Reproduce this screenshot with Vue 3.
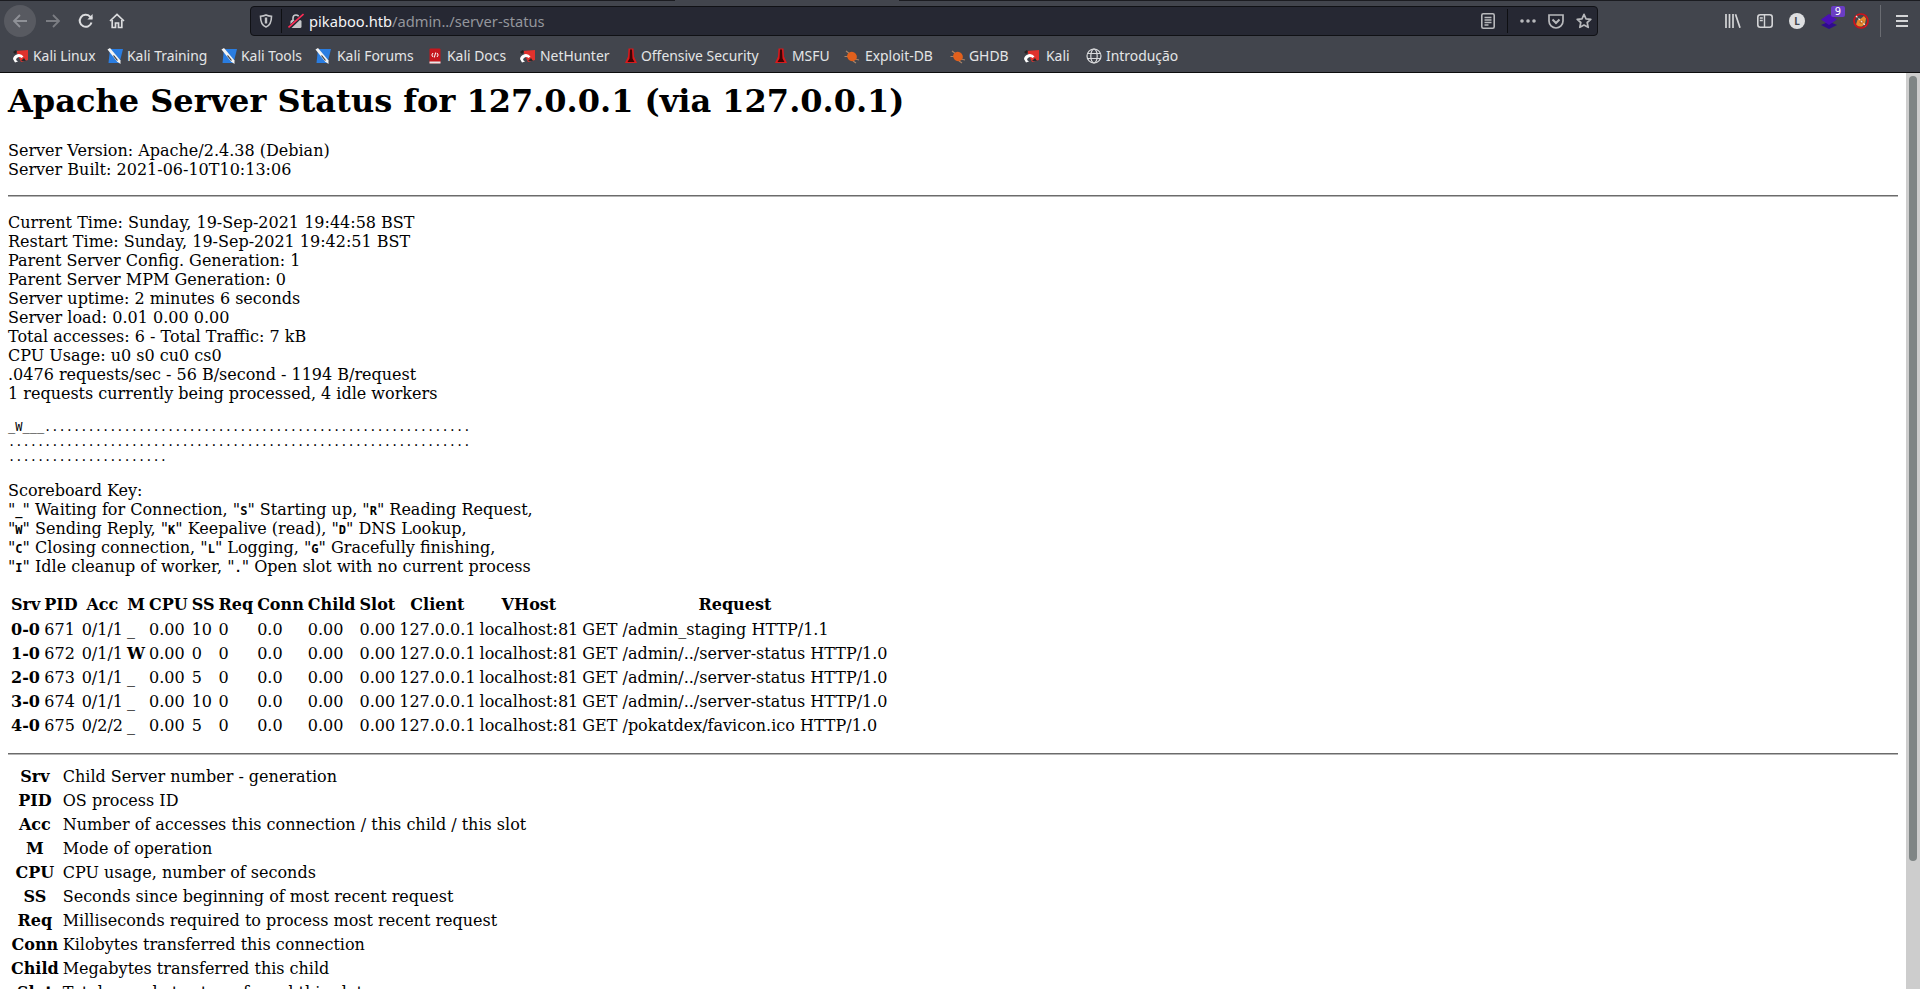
<script setup>
const bookmarks = [
  { label: 'Kali Linux', icon: 'kali', width: 95, gap: 5 },
  { label: 'Kali Training', icon: 'blue', width: 114, gap: 4 },
  { label: 'Kali Tools', icon: 'blue', width: 94, gap: 4 },
  { label: 'Kali Forums', icon: 'blue', width: 112, gap: 6 },
  { label: 'Kali Docs', icon: 'docs', width: 92, gap: 4 },
  { label: 'NetHunter', icon: 'kali', width: 104, gap: 5 },
  { label: 'Offensive Security', icon: 'msf', width: 150, gap: 2 },
  { label: 'MSFU', icon: 'msf', width: 71, gap: 3 },
  { label: 'Exploit-DB', icon: 'bug', width: 106, gap: 5 },
  { label: 'GHDB', icon: 'bug', width: 73, gap: 3 },
  { label: 'Kali', icon: 'kali', width: 63, gap: 7 },
  { label: 'Introdução', icon: 'globe', width: 100, gap: 4 }
]
const headers = ['Srv', 'PID', 'Acc', 'M', 'CPU', 'SS', 'Req', 'Conn', 'Child', 'Slot', 'Client', 'VHost', 'Request']
const rows = [
  ['0-0', '671', '0/1/1', '_', '0.00', '10', '0', '0.0', '0.00', '0.00', '127.0.0.1', 'localhost:81', 'GET /admin_staging HTTP/1.1'],
  ['1-0', '672', '0/1/1', 'W', '0.00', '0', '0', '0.0', '0.00', '0.00', '127.0.0.1', 'localhost:81', 'GET /admin/../server-status HTTP/1.0'],
  ['2-0', '673', '0/1/1', '_', '0.00', '5', '0', '0.0', '0.00', '0.00', '127.0.0.1', 'localhost:81', 'GET /admin/../server-status HTTP/1.0'],
  ['3-0', '674', '0/1/1', '_', '0.00', '10', '0', '0.0', '0.00', '0.00', '127.0.0.1', 'localhost:81', 'GET /admin/../server-status HTTP/1.0'],
  ['4-0', '675', '0/2/2', '_', '0.00', '5', '0', '0.0', '0.00', '0.00', '127.0.0.1', 'localhost:81', 'GET /pokatdex/favicon.ico HTTP/1.0']
]
const legend = [
  ['Srv', 'Child Server number - generation'],
  ['PID', 'OS process ID'],
  ['Acc', 'Number of accesses this connection / this child / this slot'],
  ['M', 'Mode of operation'],
  ['CPU', 'CPU usage, number of seconds'],
  ['SS', 'Seconds since beginning of most recent request'],
  ['Req', 'Milliseconds required to process most recent request'],
  ['Conn', 'Kilobytes transferred this connection'],
  ['Child', 'Megabytes transferred this child'],
  ['Slot', 'Total megabytes transferred this slot']
]
const board = ['_W___' + '.'.repeat(59), '.'.repeat(64), '.'.repeat(22)]
</script>

<template>
  <div class="window">
    <div class="topline"><span class="tabgap"></span></div>
    <header class="navbar">
      <div class="navbtns">
        <span class="backbtn">
          <svg width="16" height="16" viewBox="0 0 16 16" fill="none" stroke="#8f9197" stroke-width="1.8"><path d="M15 8H2M8 2L2 8l6 6"/></svg>
        </span>
        <svg class="fwd" width="16" height="16" viewBox="0 0 16 16" fill="none" stroke="#7b7d83" stroke-width="1.8"><path d="M1 8h13M8 2l6 6-6 6"/></svg>
        <svg class="reload" width="16" height="16" viewBox="0 0 16 16" fill="none" stroke="#dcdddf" stroke-width="2"><path d="M13.5 9.5A6 6 0 1 1 12 3.6L14 5.5"/><path d="M14.6 1v5.4H9.4" stroke="none" fill="#dcdddf"/></svg>
        <svg class="home" width="16" height="16" viewBox="0 0 16 16" fill="none" stroke="#dcdddf" stroke-width="1.7"><path d="M1 8l7-6.500L15 8"/><path d="M3.200 7v7.500h3.300V10h3v4.500h3.300V7"/></svg>
      </div>
      <div class="urlbar">
        <svg class="shield" width="14" height="14" viewBox="0 0 14 14" fill="none" stroke="#c2c3c6" stroke-width="1.6"><path d="M7 1c2 1 3.500 1.200 5.500 1.200C12.500 8 11 11.500 7 13 3 11.500 1.500 8 1.500 2.200 3.500 2.200 5 2 7 1z"/><path d="M7 3.500v6" stroke-width="2.400"/></svg>
        <span class="sep"></span>
        <svg class="lock" width="16" height="16" viewBox="0 0 16 16" fill="none"><path d="M5 7V5a3 3 0 0 1 6 0v2" stroke="#c6c7ca" stroke-width="1.600"/><rect x="2.500" y="7" width="11" height="8" rx="1.500" fill="#c6c7ca"/><path d="M1 15L15 1.500" stroke="#262833" stroke-width="3.500"/><path d="M0.500 14.500L15.500 1" stroke="#ff2d55" stroke-width="1.600"/></svg>
        <div class="url"><span class="host">pikaboo.htb</span><span class="path">/admin../server-status</span></div>
        <svg class="reader" width="14" height="16" viewBox="0 0 14 16" fill="none"><rect x="0.800" y="0.800" width="12.400" height="14.400" rx="1.500" stroke="#b8b9bc" stroke-width="1.600"/><path d="M3.500 4.500h7M3.500 7h7M3.500 9.500h7M3.500 12h4" stroke="#b8b9bc" stroke-width="1.300"/></svg>
        <span class="sep sep2"></span>
        <svg class="dots" width="16" height="4" viewBox="0 0 16 4" fill="#b8b9bc"><circle cx="2" cy="2" r="1.800"/><circle cx="8" cy="2" r="1.800"/><circle cx="14" cy="2" r="1.800"/></svg>
        <svg class="pocket" width="16" height="16" viewBox="0 0 16 16" fill="none" stroke="#b8b9bc" stroke-width="1.700"><path d="M1 2h14v6a7 7 0 0 1-14 0z"/><path d="M4.500 6.500L8 10l3.500-3.500" stroke-width="2"/></svg>
        <svg class="star" width="16" height="16" viewBox="0 0 16 16" fill="none" stroke="#b8b9bc" stroke-width="1.700" stroke-linejoin="round"><path d="M8 1.300l2 4.500 4.800.500-3.600 3.200 1 4.800L8 12l-4.200 2.300 1-4.800L1.200 6.300 6 5.800z"/></svg>
      </div>
      <div class="tools">
        <svg class="t-lib" width="16" height="14" viewBox="0 0 16 14" fill="none" stroke="#d4d5d7" stroke-width="1.700"><path d="M1 0v14M4.500 0v14M8 0v14M10.500 0.300l4.500 13.500"/></svg>
        <svg class="t-side" width="16" height="14" viewBox="0 0 16 14" fill="none" stroke="#d4d5d7" stroke-width="1.600"><rect x="0.800" y="0.800" width="14.400" height="12.400" rx="2.500"/><path d="M7.500 1v12M2.800 4h3M2.800 6.500h3" stroke-width="1.400"/></svg>
        <span class="t-user">L</span>
        <span class="t-ublock">
          <svg width="16" height="16" viewBox="0 0 16 16"><path d="M8 8.500l8 3.500-8 4-8-4z" fill="#2f0c8c"/><path d="M8 1l8 5.500L8 12 0 6.500z" fill="#4a0fb5"/></svg>
          <span class="badge">9</span>
        </span>
        <svg class="t-foxy" width="16" height="16" viewBox="0 0 16 16"><path d="M3 11.500L4.500 7 8 5.500 11 3l2 2.500-1 5.500-3 2.500H5z" fill="#e8892c"/><path d="M6 9l3-2 2 2-3 2z" fill="#b9651c"/><circle cx="8" cy="8" r="7" fill="none" stroke="#d0121a" stroke-width="1.700"/><path d="M3 3l10 10" stroke="#f0e4d8" stroke-width="1.300" stroke-dasharray="2 1.500"/></svg>
        <span class="t-sep"></span>
        <svg class="t-menu" width="12" height="12" viewBox="0 0 12 12" fill="#d4d5d7"><rect y="0" width="12" height="2"/><rect y="5" width="12" height="2"/><rect y="10" width="12" height="2"/></svg>
      </div>
    </header>
    <nav class="bookmarks">
      <div v-for="b in bookmarks" :key="b.label" class="bm" :style="{ width: b.width + 'px' }">
        <svg v-if="b.icon === 'kali'" class="fav" viewBox="0 0 16 16"><path d="M4 3L16 2v10L9 14z" fill="#e0322d"/><path d="M1 4l3-2 1 2-2 2z" fill="#222"/><path d="M1 11a5.800 5.800 0 0 1 10.500-2.500L9.500 10a3.300 3.300 0 0 0-5.500 2l2 1.500L3 14.500z" fill="#fff"/><path d="M9 13l3-3 2 3z" fill="#2a2a2a"/></svg>
        <svg v-else-if="b.icon === 'blue'" class="fav" viewBox="0 0 16 16"><path d="M3 1h13L12.500 15H1.500z" fill="#2a7de1"/><path d="M0.500 1.500L3 0l10.500 12.500 0 3.500-3.500-2.500z" fill="#f4f4f4"/><path d="M6.500 7.500l4 5" stroke="#333" stroke-width="1.200"/></svg>
        <svg v-else-if="b.icon === 'docs'" class="fav" viewBox="0 0 16 16"><rect x="2.500" y="0.500" width="11" height="15" rx="1" fill="#c5171d"/><rect x="2.500" y="13.500" width="11" height="2" fill="#e8e8e8"/><path d="M6 5L4.800 7 6 9M10 5l1.200 2L10 9M8.700 4.500L7.300 9.500" stroke="#fff" stroke-width="1" fill="none"/></svg>
        <svg v-else-if="b.icon === 'msf'" class="fav" viewBox="0 0 16 16"><path d="M5.500 0.500h5l0.500 8 3 6.500H2l3-6.500z" fill="#d8191c"/><path d="M7 1.500h2l0.500 9 2 3.500H4.500l2-3.500z" fill="#3c0404"/></svg>
        <svg v-else-if="b.icon === 'bug'" class="fav" viewBox="0 0 16 16"><path d="M2 3l4 3M0.500 8.500h3.500M11 11l4 1M9 13l3 2" stroke="#a98468" stroke-width="1.200"/><ellipse cx="8" cy="8.500" rx="5" ry="4.500" fill="#e2601c" transform="rotate(30 8 8.500)"/></svg>
        <svg v-else class="fav" viewBox="0 0 16 16" fill="none" stroke="#d8d9db" stroke-width="1.200"><circle cx="8" cy="8" r="7"/><ellipse cx="8" cy="8" rx="3.200" ry="7"/><path d="M1.500 5.500h13M1.500 10.500h13"/></svg>
        <span class="bm-label" :style="{ marginLeft: b.gap + 'px' }">{{ b.label }}</span>
      </div>
    </nav>
    <div class="viewport">
      <main class="page">
        <h1>Apache Server Status for 127.0.0.1 (via 127.0.0.1)</h1>
        <dl class="block">
          <dt>Server Version: Apache/2.4.38 (Debian)</dt>
          <dt>Server Built: 2021-06-10T10:13:06</dt>
        </dl>
        <hr />
        <dl class="block">
          <dt>Current Time: Sunday, 19-Sep-2021 19:44:58 BST</dt>
          <dt>Restart Time: Sunday, 19-Sep-2021 19:42:51 BST</dt>
          <dt>Parent Server Config. Generation: 1</dt>
          <dt>Parent Server MPM Generation: 0</dt>
          <dt>Server uptime: 2 minutes 6 seconds</dt>
          <dt>Server load: 0.01 0.00 0.00</dt>
          <dt>Total accesses: 6 - Total Traffic: 7 kB</dt>
          <dt>CPU Usage: u0 s0 cu0 cs0</dt>
          <dt>.0476 requests/sec - 56 B/second - 1194 B/request</dt>
          <dt>1 requests currently being processed, 4 idle workers</dt>
        </dl>
        <pre class="board">{{ board.join('\n') }}</pre>
        <p class="key">Scoreboard Key:<br />
          "<b class="k">_</b>" Waiting for Connection, "<b class="k">S</b>" Starting up, "<b class="k">R</b>" Reading Request,<br />
          "<b class="k">W</b>" Sending Reply, "<b class="k">K</b>" Keepalive (read), "<b class="k">D</b>" DNS Lookup,<br />
          "<b class="k">C</b>" Closing connection, "<b class="k">L</b>" Logging, "<b class="k">G</b>" Gracefully finishing,<br />
          "<b class="k">I</b>" Idle cleanup of worker, "<b class="k">.</b>" Open slot with no current process
        </p>
        <table class="status">
          <thead>
            <tr><th v-for="h in headers" :key="h">{{ h }}</th></tr>
          </thead>
          <tbody>
            <tr v-for="r in rows" :key="r[0]">
              <td v-for="(c, i) in r" :key="i"><b v-if="i === 0 || c === 'W'">{{ c }}</b><template v-else>{{ c }}</template></td>
            </tr>
          </tbody>
        </table>
        <hr class="hr2" />
        <table class="legend">
          <tbody>
            <tr v-for="l in legend" :key="l[0]">
              <th>{{ l[0] }}</th>
              <td>{{ l[1] }}</td>
            </tr>
          </tbody>
        </table>
      </main>
      <aside class="scrollbar"><span class="thumb"></span></aside>
    </div>
  </div>
</template>

<style>
html, body { margin: 0; overflow: hidden; background: #fff; }
</style>

<style scoped>
.window { width: 1920px; height: 989px; display: flex; flex-direction: column; overflow: hidden; }
.topline { height: 1px; background: #1b1c21; display: flex; padding-left: 675px; flex: none; }
.tabgap { width: 224px; background: #42454d; }
.navbar { height: 36px; flex: none; background: #42454d; display: flex; align-items: flex-start; font-family: "Noto Sans", sans-serif; }
.navbtns { width: 250px; height: 40px; display: flex; align-items: center; padding-left: 4px; box-sizing: border-box; flex: none; }
.backbtn { width: 32px; height: 32px; border-radius: 50%; background: #585a61; display: flex; align-items: center; justify-content: center; flex: none; }
.fwd { margin-left: 9px; }
.reload { margin-left: 17px; }
.home { margin-left: 15px; }
.urlbar { width: 1348px; height: 30px; margin-top: 5px; box-sizing: border-box; background: #262833; border: 1px solid #101115; border-radius: 4px; display: flex; align-items: center; padding-left: 8px; flex: none; }
.shield { flex: none; }
.sep { width: 1px; height: 24px; background: #0e0f12; margin-left: 8px; flex: none; }
.lock { margin-left: 6px; flex: none; }
.url { width: 1170px; margin-left: 5px; font-size: 14.7px; white-space: nowrap; flex: none; }
.host { color: #f4f4f6; }
.path { color: #94969c; }
.reader { flex: none; margin-left: 2px; }
.sep2 { margin-left: 12px; height: 24px; }
.dots { margin-left: 12px; flex: none; }
.pocket { margin-left: 12px; flex: none; }
.star { margin-left: 12px; flex: none; }
.tools { flex: 1; height: 40px; display: flex; align-items: center; padding-left: 127px; box-sizing: border-box; }
.t-side { margin-left: 16px; }
.t-user { width: 16px; height: 16px; margin-left: 16px; border-radius: 50%; background: #dedfe1; color: #42454d; font: bold 10px/16px "Noto Sans", sans-serif; text-align: center; }
.t-ublock { margin-left: 16px; width: 16px; height: 16px; position: relative; }
.t-ublock svg { display: block; }
.badge { position: absolute; left: 10px; top: -7px; width: 14px; height: 11px; background: #6a3dc4; border-radius: 2px; color: #fff; font: 10px/11px "DejaVu Sans", sans-serif; text-align: center; }
.t-foxy { margin-left: 16px; }
.t-sep { width: 1px; height: 33px; background: #6a6c72; margin-left: 11px; }
.t-menu { margin-left: 15px; }
.bookmarks { height: 36px; flex: none; box-sizing: border-box; background: #42454d; border-bottom: 1px solid #0c0c0d; padding: 2px 0 0 12px; display: flex; align-items: center; font: 13.9px "Noto Sans", sans-serif; color: #e4e5e7; }
.bm { display: flex; align-items: center; flex: none; white-space: nowrap; }
.fav { width: 16px; height: 16px; flex: none; }
.viewport { flex: 1; display: flex; min-height: 0; overflow: hidden; }
.page { flex: 1; min-width: 0; box-sizing: border-box; padding: 9.5px 8px 8px; background: #fff; color: #000; font: 16px/19px "DejaVu Serif", serif; overflow: hidden; }
.scrollbar { width: 14px; flex: none; background: #cdcdcd; padding: 3px 3px 0; box-sizing: border-box; }
.thumb { display: block; width: 8px; height: 785px; background: #7f8585; border-radius: 4px; }
h1 { font-size: 32px; line-height: 37px; margin: 0 0 21.44px; font-weight: bold; }
.block { margin: 0; }
.block dt { display: block; }
hr { border: 0; border-top: 1px solid #6b6b6b; border-bottom: 1px solid #b5b5b5; margin: 16px 0; height: 0; }
.board { margin: 17px 0 16px; font: 12px/15px "DejaVu Sans Mono", monospace; }
.key { margin: 16px 0; }
.k { font: bold 12px "DejaVu Sans Mono", monospace; }
table { border-spacing: 2px; border-collapse: separate; font: 16px/19px "DejaVu Serif", serif; }
th, td { padding: 1px 1px 2px; white-space: nowrap; text-align: left; font-weight: normal; }
th { text-align: center; font-weight: bold; }
.status thead th { padding-bottom: 3px; }
.status { margin: 0; }
.hr2 { margin: 14px 0 9px; }
.legend { margin: 0; }
</style>
